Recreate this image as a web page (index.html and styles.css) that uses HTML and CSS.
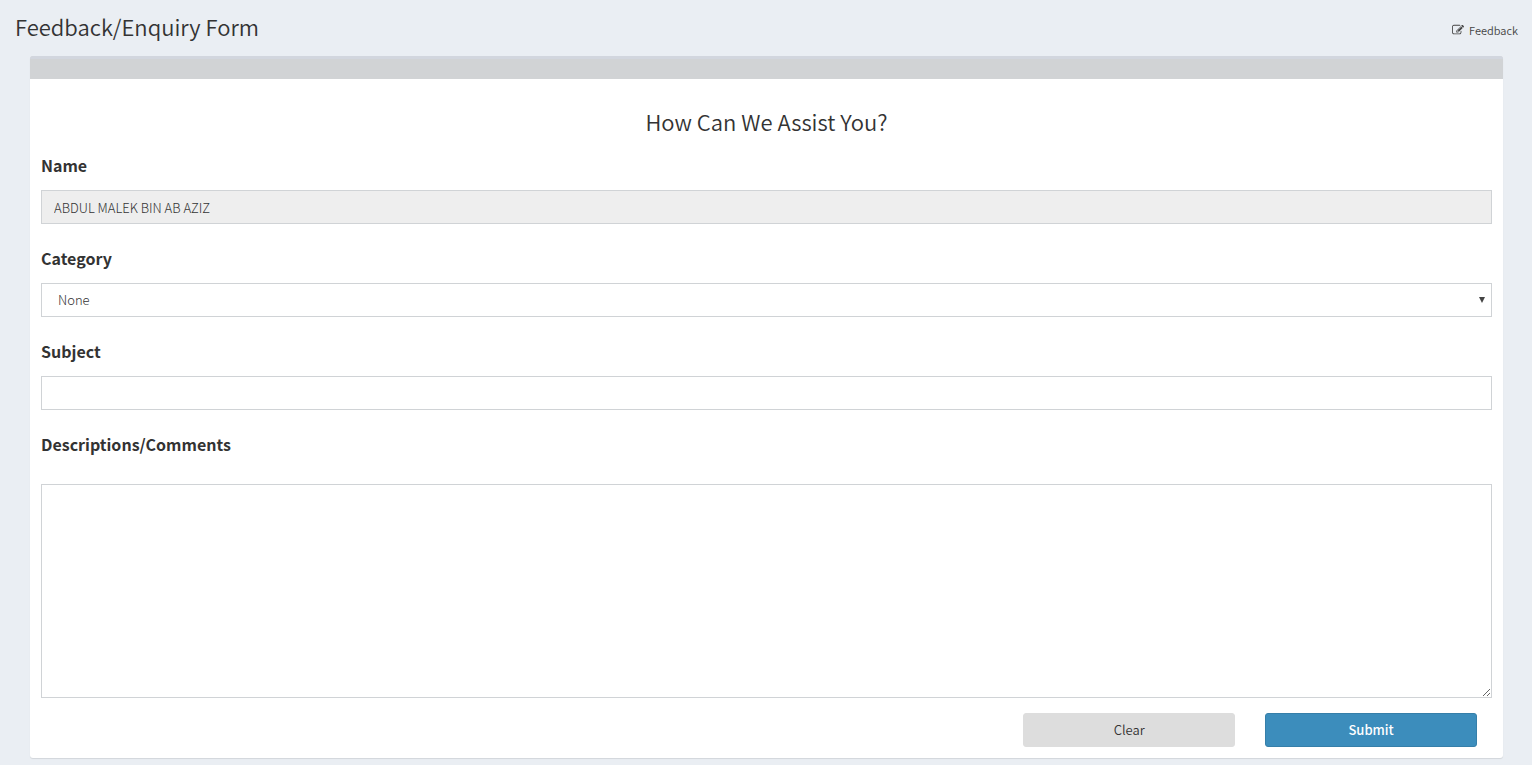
FILE: index.html
```html
<!DOCTYPE html>
<html lang="en">
<head>
<meta charset="utf-8">
<meta name="viewport" content="width=device-width, initial-scale=1">
<title>Feedback/Enquiry Form</title>
<link rel="stylesheet" href="styles.css">
</head>
<body>
<header class="page-header">
  <h1 class="page-title">Feedback/Enquiry Form</h1>
  <a class="crumb" href="#">
    <svg class="crumb-icon" viewBox="0 0 1792 1792" aria-hidden="true"><path fill="currentColor" d="M888 1184l116-116-152-152-116 116v56h96v96h56zm440-720q-16-16-33 1l-350 350q-17 17-1 33t33-1l350-350q17-17 1-33zm80 594v190q0 119-84.500 203.500t-203.500 84.500h-832q-119 0-203.500-84.500t-84.500-203.500v-832q0-119 84.500-203.500t203.500-84.500h832q63 0 117 25 15 7 18 23 3 17-9 29l-49 49q-14 14-32 8-23-6-45-6h-832q-66 0-113 47t-47 113v832q0 66 47 113t113 47h832q66 0 113-47t47-113v-126q0-13 9-22l64-64q15-15 35-7t20 29zm-96-738l288 288-672 672h-288v-288zm444 132l-92 92-288-288 92-92q28-28 68-28t68 28l152 152q28 28 28 68t-28 68z"/></svg>
    Feedback
  </a>
</header>
<main class="card">
  <div class="card-bar"></div>
  <form class="form">
    <h2 class="form-title">How Can We Assist You?</h2>
    <div class="field">
      <label class="label" for="name">Name</label>
      <input class="control control-readonly" id="name" type="text" value="ABDUL MALEK BIN AB AZIZ" readonly>
    </div>
    <div class="field">
      <label class="label" for="category">Category</label>
      <div class="select-wrap">
        <select class="control control-select" id="category"><option>None</option></select>
        <svg class="select-arrow" viewBox="0 0 6 6" aria-hidden="true"><path d="M0 0h6L3 6z" fill="#444"/></svg>
      </div>
    </div>
    <div class="field">
      <label class="label" for="subject">Subject</label>
      <input class="control" id="subject" type="text">
    </div>
    <div class="field field-long">
      <label class="label" for="comments">Descriptions/Comments</label>
      <textarea class="control control-area" id="comments" rows="10"></textarea>
    </div>
    <div class="actions">
      <button class="btn btn-clear" type="reset">Clear</button>
      <button class="btn btn-submit" type="submit">Submit</button>
    </div>
  </form>
</main>
</body>
</html>
```
FILE: styles.css
```css
* {
  box-sizing: border-box;
}

body {
  margin: 0;
  background: #eaeef3;
  color: #333;
  font-family: "Source Sans Pro", "Noto Sans CJK SC", sans-serif;
  font-size: 13px;
  font-weight: 350;
  line-height: 20px;
}

.page-header {
  display: flex;
  align-items: center;
  justify-content: space-between;
  padding: 12px 14px 16px 15px;
}

.page-title,
.form-title {
  margin: 0;
  font-size: 22px;
  font-weight: 350;
  line-height: 26px;
}

.crumb {
  display: flex;
  align-items: center;
  gap: 5px;
  padding-top: 8px;
  color: #444;
  font-size: 11px;
  text-decoration: none;
}

.crumb-icon {
  width: 12px;
  height: 12px;
}

.card {
  margin: 0 29px 7px 30px;
  overflow: hidden;
  background: #fff;
  border-radius: 3px;
  box-shadow: 0 1px 1px rgba(0, 0, 0, 0.1);
}

.card-bar {
  height: 23px;
  background: #d1d3d5;
  border-top: 3px solid #d2d6de;
}

.form {
  padding: 29px 11px 11px;
}

.form-title {
  margin-bottom: 21px;
  text-align: center;
}

.field {
  display: flex;
  flex-direction: column;
  gap: 15px;
  margin-bottom: 24px;
}

.field-long {
  gap: 30px;
  margin-bottom: 15px;
}

.label {
  font-size: 16px;
  font-weight: 700;
}

.control {
  display: block;
  width: 100%;
  height: 34px;
  margin: 0;
  padding: 6px 12px;
  background: #fff;
  border: 1px solid #d0d3d6;
  border-radius: 0;
  color: #333;
  font: inherit;
  font-weight: 300;
}

.control-readonly {
  background: #eee;
}

.select-wrap {
  position: relative;
}

.control-select {
  padding: 6px 16px;
  appearance: none;
}

.select-arrow {
  position: absolute;
  top: 14px;
  right: 7px;
  width: 6px;
  height: 6px;
  pointer-events: none;
}

.control-area {
  height: 214px;
  resize: vertical;
}

.actions {
  display: grid;
  grid-template-columns: repeat(6, 1fr);
  gap: 30px;
  padding: 0 15px;
}

.btn {
  height: 34px;
  padding: 6px 12px;
  border: 1px solid transparent;
  border-radius: 3px;
  font: inherit;
}

.btn-clear {
  grid-column: 5;
  background: #ddd;
  border-color: #ddd;
  color: #333;
}

.btn-submit {
  grid-column: 6;
  background: #3c8dbc;
  border-color: #367fa9;
  color: #fff;
  font-weight: 500;
}
```
